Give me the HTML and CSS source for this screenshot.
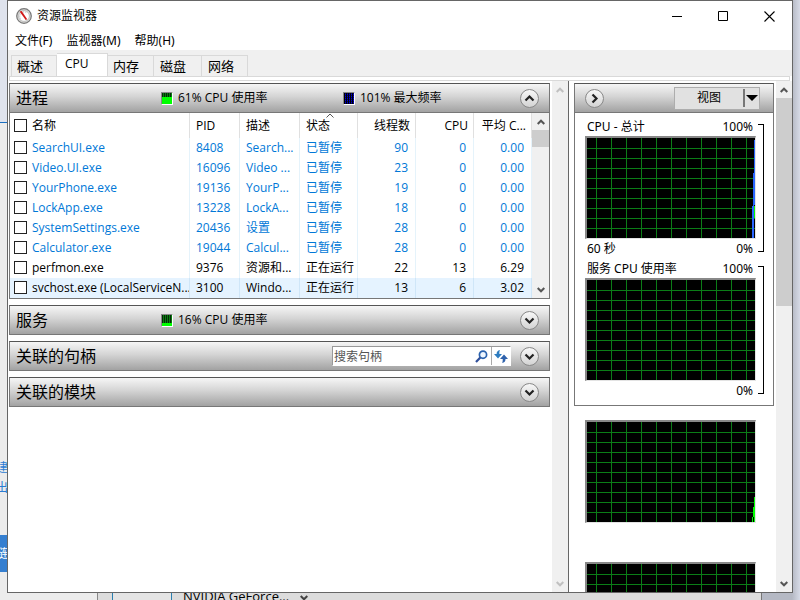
FILE: index.html
```
<!DOCTYPE html>
<html lang="zh-CN">
<head>
<meta charset="utf-8">
<title>资源监视器</title>
<link rel="stylesheet" href="styles.css">
</head>
<body>
<svg class="defs" aria-hidden="true">
  <symbol id="up" viewBox="0 0 8 6"><path d="M0.7 5 4 1.7 7.3 5" fill="none" stroke="currentColor" stroke-width="2"/></symbol>
  <symbol id="down" viewBox="0 0 8 6"><path d="M0.7 1 4 4.3 7.3 1" fill="none" stroke="currentColor" stroke-width="2"/></symbol>
  <symbol id="round-up" viewBox="0 0 19 19"><circle cx="9.500" cy="9.500" r="9" fill="url(#knob)" stroke="#888"/><path d="M5.500 11.500 9.500 7.500l4 4" fill="none" stroke="#222" stroke-width="2.200"/></symbol>
  <symbol id="round-down" viewBox="0 0 19 19"><circle cx="9.500" cy="9.500" r="9" fill="url(#knob)" stroke="#888"/><path d="M5.500 7.500l4 4 4-4" fill="none" stroke="#222" stroke-width="2.200"/></symbol>
  <symbol id="round-right" viewBox="0 0 19 19"><circle cx="9.500" cy="9.500" r="9" fill="url(#knob)" stroke="#888"/><path d="M7.500 5.500l4 4-4 4" fill="none" stroke="#222" stroke-width="2.200"/></symbol>
  <linearGradient id="knob" x1="0" y1="0" x2="0" y2="1"><stop offset="0" stop-color="#f8f8f8"/><stop offset="1" stop-color="#d2d2d2"/></linearGradient>
</svg>

<div class="desktop" aria-hidden="true">
  <div class="back-left">
    <span class="back-word word-a">建</span>
    <span class="back-word word-b">出</span>
    <span class="back-tile">链</span>
  </div>
  <div class="back-bottom"><span class="thumb"></span><span class="gpu">NVIDIA GeForce...</span><svg width="8" height="6"><use href="#down"/></svg></div>
</div>

<main class="window">
  <header class="titlebar">
    <svg class="app-icon" viewBox="0 0 16 16"><circle cx="8" cy="8" r="7.300" fill="#d9d9d6" stroke="#777" stroke-width="1.200"/><circle cx="8" cy="8" r="5.400" fill="#fff" stroke="#aaa" stroke-width=".7"/><path d="M4.500 10.500A4.300 4.300 0 0 1 11 5" fill="none" stroke="#999" stroke-width=".8" stroke-dasharray="1 1"/><path d="M3.600 3.600 5.700 3l5.500 8.200-1.500.9z" fill="#d01818"/></svg>
    <h1>资源监视器</h1>
    <button class="caption" aria-label="最小化"><svg width="11" height="11"><path d="M0 5.500h10" stroke="#000"/></svg></button>
    <button class="caption" aria-label="最大化"><svg width="11" height="11"><path d="M.5.5h9v9h-9z" fill="none" stroke="#000"/></svg></button>
    <button class="caption" aria-label="关闭"><svg width="11" height="11"><path d="M.5.5l10 10M10.500.5l-10 10" stroke="#000" stroke-width="1.100"/></svg></button>
  </header>
  <nav class="menubar"><button>文件(F)</button><button>监视器(M)</button><button>帮助(H)</button></nav>
  <div class="tabs" role="tablist">
    <button role="tab">概述</button><button role="tab" class="active" aria-selected="true">CPU</button><button role="tab">内存</button><button role="tab" class="wide">磁盘</button><button role="tab">网络</button>
  </div>
  <div class="tab-edge"></div>

  <div class="content">
    <div class="left">
      <section class="panel">
        <div class="bar">
          <h2>进程</h2>
          <span class="stat"><i class="meter level-61"></i>61% CPU 使用率</span>
          <span class="stat"><i class="meter freq"></i>101% 最大频率</span>
          <button class="round" aria-label="折叠"><svg><use href="#round-up"/></svg></button>
        </div>
        <div class="table-wrap">
          <table>
            <colgroup><col><col class="c-pid"><col class="c-desc"><col class="c-num"><col class="c-num"><col class="c-num"><col class="c-num"></colgroup>
            <thead><tr>
              <th><input type="checkbox" aria-label="全选">名称</th><th>PID</th><th>描述</th><th class="sorted">状态<svg width="8" height="5"><path d="M.5 4.500 4 1l3.500 3.500" fill="none" stroke="#555"/></svg></th><th class="n">线程数</th><th class="n">CPU</th><th class="n">平均 C...</th>
            </tr></thead>
            <tbody>
              <tr><td><label><input type="checkbox">SearchUI.exe</label></td><td>8408</td><td>Search...</td><td>已暂停</td><td class="n">90</td><td class="n">0</td><td class="n">0.00</td></tr>
              <tr><td><label><input type="checkbox">Video.UI.exe</label></td><td>16096</td><td>Video ...</td><td>已暂停</td><td class="n">23</td><td class="n">0</td><td class="n">0.00</td></tr>
              <tr><td><label><input type="checkbox">YourPhone.exe</label></td><td>19136</td><td>YourP...</td><td>已暂停</td><td class="n">19</td><td class="n">0</td><td class="n">0.00</td></tr>
              <tr><td><label><input type="checkbox">LockApp.exe</label></td><td>13228</td><td>LockA...</td><td>已暂停</td><td class="n">18</td><td class="n">0</td><td class="n">0.00</td></tr>
              <tr><td><label><input type="checkbox">SystemSettings.exe</label></td><td>20436</td><td>设置</td><td>已暂停</td><td class="n">28</td><td class="n">0</td><td class="n">0.00</td></tr>
              <tr><td><label><input type="checkbox">Calculator.exe</label></td><td>19044</td><td>Calcul...</td><td>已暂停</td><td class="n">28</td><td class="n">0</td><td class="n">0.00</td></tr>
              <tr class="running"><td><label><input type="checkbox">perfmon.exe</label></td><td>9376</td><td>资源和...</td><td>正在运行</td><td class="n">22</td><td class="n">13</td><td class="n">6.29</td></tr>
              <tr class="running hover"><td><label><input type="checkbox">svchost.exe (LocalServiceN...</label></td><td>3100</td><td>Windo...</td><td>正在运行</td><td class="n">13</td><td class="n">6</td><td class="n">3.02</td></tr>
            </tbody>
          </table>
          <div class="scroll"><svg><use href="#up"/></svg><span class="thumb-small"></span><svg><use href="#down"/></svg></div>
        </div>
      </section>
      <section class="panel"><div class="bar">
        <h2>服务</h2><span class="stat"><i class="meter level-16"></i>16% CPU 使用率</span>
        <button class="round" aria-label="展开"><svg><use href="#round-down"/></svg></button>
      </div></section>
      <section class="panel"><div class="bar">
        <h2>关联的句柄</h2>
        <div class="search">
          <input type="text" placeholder="搜索句柄" aria-label="搜索句柄">
          <button aria-label="搜索"><svg width="13" height="13"><circle cx="8" cy="4.700" r="3.600" fill="#eef6ff" stroke="#2a62ae" stroke-width="1.700"/><path d="M5.300 7.600 1 12" stroke="#2f4f9a" stroke-width="2.200"/></svg></button>
          <button class="refresh" aria-label="刷新"><svg width="14" height="13"><path d="M6 0C3.500.4 2.600 2 2.600 4H0l4 4.500L8 4H5.400C5.300 2.400 5.400 1.200 6 0z" fill="#2d7cc0"/><path d="M8 13c2.600-.3 3.500-2 3.500-4H14l-4-4.500L6 9h2.700c.1 1.600 0 2.900-.7 4z" fill="#2f62ac"/></svg></button>
        </div>
        <button class="round" aria-label="展开"><svg><use href="#round-down"/></svg></button>
      </div></section>
      <section class="panel"><div class="bar">
        <h2>关联的模块</h2>
        <button class="round" aria-label="展开"><svg><use href="#round-down"/></svg></button>
      </div></section>
    </div>
    <div class="scroll disabled"><svg><use href="#up"/></svg><span class="track"></span><svg><use href="#down"/></svg></div>

    <aside class="right">
      <section class="panel">
        <div class="bar">
          <button class="round" aria-label="隐藏图表"><svg><use href="#round-right"/></svg></button>
          <div class="view"><button>视图</button><button class="drop" aria-label="视图选项"><svg width="12" height="6"><path d="M0 0h12L6 6z"/></svg></button></div>
        </div>
        <div class="charts">
          <div class="chart">
            <div class="plot-col">
              <div class="caption-row"><span>CPU - 总计</span><span>100%</span></div>
              <div class="plot"><svg viewBox="0 0 6 100"><path d="M5.500 2v65M4.500 35v65M3.500 68v32" stroke="#2a66ff"/><path d="M5.500 68v12" stroke="#0f0"/></svg></div>
              <div class="caption-row"><span>60 秒</span><span>0%</span></div>
            </div>
            <div class="bracket"></div>
          </div>
          <div class="chart">
            <div class="plot-col">
              <div class="caption-row"><span>服务 CPU 使用率</span><span>100%</span></div>
              <div class="plot"></div>
              <div class="caption-row end"><span>0%</span></div>
            </div>
            <div class="bracket"></div>
          </div>
        </div>
      </section>
      <div class="plot loose"><svg viewBox="0 0 6 100"><path d="M5.500 75v25M4.500 85v10M3.500 95v5" stroke="#0f0"/></svg></div>
      <div class="plot loose"></div>
    </aside>
    <div class="scroll"><svg><use href="#up"/></svg><span class="thumb-long"></span><svg><use href="#down"/></svg></div>
  </div>
</main>
</body>
</html>
```
FILE: styles.css
```
* { box-sizing: border-box; }
body {
  margin: 0;
  height: 100vh;
  padding: 0 7px 7px;
  overflow: hidden;
  background: #d4d8e2;
  font: 12px/20px "Open Sans", "Noto Sans CJK SC", sans-serif;
  color: #000;
}
button, input { font: inherit; color: inherit; margin: 0; }
button { padding: 0; border: 0; background: none; }
h1, h2 { margin: 0; font-weight: 400; }
svg { display: block; flex: none; }
.defs { position: absolute; width: 0; height: 0; }

/* windows behind the monitor */
.desktop { position: absolute; inset: 0; overflow: hidden; z-index: -1; background: linear-gradient(to left, #d6dae6, #b5b9c4 8px); }
.back-left {
  position: absolute; left: 0; top: 0; bottom: 0; width: 98px;
  background: linear-gradient(#dfe3ed 122px, #1a6fc0 122px, #1a6fc0 123px, #ececec 123px);
  border-right: 1px solid #888;
}
.back-word { position: absolute; left: -4px; color: #2b7cd3; }
.word-a { top: 458px; }
.word-b { top: 478px; }
.back-tile { position: absolute; left: 0; top: 535px; width: 30px; height: 37px; background: #357fd0; color: #fff; line-height: 37px; text-indent: -4px; }
.back-bottom {
  position: absolute; left: 98px; right: 38px; bottom: 0; height: 16px;
  display: flex; align-items: flex-end; gap: 11px; padding-left: 14px;
  background: #dcdcdc; border-right: 1px solid #777;
}
.back-bottom svg { color: #444; margin-bottom: -1px; }
.back-bottom .thumb { width: 60px; height: 16px; border: solid #2a7fb0; border-width: 0 1px; background: #e4e4e4; }
.gpu { line-height: 16px; height: 12px; font-size: 13px; }

/* window frame */
.window { height: 100%; display: flex; flex-direction: column; background: #fff; border: 1px solid #666; overflow: hidden; }
.titlebar { display: flex; align-items: center; height: 30px; padding-left: 8px; flex: none; }
.app-icon { width: 16px; height: 16px; margin-right: 5px; }
h1 { font-size: 12px; flex: 1; }
.caption { width: 46px; height: 30px; display: grid; place-items: center; }
.menubar { display: flex; gap: 14px; padding-left: 7px; height: 19px; flex: none; font-family: "Noto Sans", "Noto Sans CJK SC", sans-serif; }
.tabs { display: flex; align-items: flex-end; height: 26px; padding-left: 3px; background: #f0f0f0; flex: none; font-size: 13px; }
.tabs button { width: 46px; height: 21px; padding-left: 5px; line-height: 18px; text-align: left; border: 1px solid #d9d9d9; border-width: 1px 1px 0 0; background: #f0f0f0; }
.tabs button:first-child { border-left-width: 1px; }
.tabs .wide { width: 48px; padding-left: 6px; }
.tabs button:last-child { padding-left: 6px; }
.tabs .active { width: 51px; height: 23px; padding: 0 0 2px 8px; background: #fff; font-size: 12px; }
.tab-edge { height: 5px; margin: 0 2px 0 1px; border: 1px solid #d9d9d9; flex: none; }

/* two scrolling columns */
.content { flex: 1; min-height: 0; display: flex; }
.left { flex: 1; min-width: 0; padding: 2px 2px 0 1px; display: flex; flex-direction: column; gap: 6px; }
.right { width: 208px; padding: 2px 2px 0 5px; border-left: 1px solid #666; overflow: hidden; flex: none; }
.panel { border: 1px solid #777; border-top-color: #555; background: #fff; flex: none; }
.bar { display: flex; align-items: center; height: 28px; padding: 0 10px 0 6px; background: linear-gradient(#f6f6f6, #d4d4d4 45%, #a2a2a2); }
.panel .bar:not(:last-child) { height: 29px; border-bottom: 1px solid #777; }
h2 { font-size: 16px; width: 145px; line-height: 28px; flex: none; }
.stat { display: flex; align-items: center; gap: 5px; width: 182px; flex: none; }
.bar .stat:nth-child(3) { width: 140px; }
.meter { width: 12px; height: 13px; border: 1px solid #888; border-right-color: #fff; border-bottom-color: #fff; }
.level-61 { background: repeating-linear-gradient(90deg, #032a05 0 1px, #0a7d12 1px 2px) 0 0 / 100% 4px no-repeat, #0f0; }
.level-16 { background: repeating-linear-gradient(90deg, #032a05 0 1px, #0a7d12 1px 2px) 0 0 / 100% 8px no-repeat, #0f0; }
.freq { background: repeating-linear-gradient(90deg, #000 0 1px, transparent 1px 2px), repeating-linear-gradient(#00006a 0 1px, #0000d0 1px 2px); }
.round { width: 19px; height: 19px; margin-left: auto; flex: none; }
.round svg { width: 19px; height: 19px; }

/* process list */
.table-wrap { display: flex; }
.table-wrap .scroll { width: 17px; }
table { flex: 1; table-layout: fixed; width: 100%; border-collapse: separate; border-spacing: 0; color: #0078d7; }
.c-pid { width: 50px; }
.c-desc { width: 60px; }
.c-num { width: 58px; }
th, td { height: 20px; padding: 0 6px; text-align: left; font-weight: 400; white-space: nowrap; overflow: hidden; border-right: 1px solid #e5f3fb; }
th { height: 25px; color: #000; border-right-color: #e0e0e0; position: relative; }
th:first-child, td:first-child { padding: 0 0 0 4px; }
.n { text-align: right; padding: 0 7px 0 0; }
th.n { padding-right: 5px; }
.sorted svg { position: absolute; left: 26px; top: 0; }
.running { color: #000; }
.hover td { background: #e5f3ff; border-right-color: #cfe6f8; }
input[type=checkbox] { appearance: none; width: 13px; height: 13px; border: 1px solid #222; background: #fff; vertical-align: -2px; margin-right: 5px; }

/* scroll bars */
.scroll { width: 16px; background: #f0f0f0; color: #555; display: flex; flex-direction: column; align-items: center; flex: none; }
.scroll svg { width: 8px; height: 6px; margin: 6px 0 5px; }
.disabled { color: #c0c0c0; }
.thumb-small { width: 100%; height: 17px; background: #cdcdcd; margin-bottom: auto; }
.thumb-long { width: 100%; flex: 0 1 208px; background: #cdcdcd; margin-bottom: auto; }
.track { flex: 1; }

.search { display: flex; align-items: center; width: 179px; height: 20px; margin-left: auto; background: #fff; border: 1px solid #999; border-right-color: #fff; border-bottom-color: #fff; }
.search + .round { margin-left: 9px; }
.search input { flex: 1; min-width: 0; height: 18px; padding: 2px 1px 0; border: 0; background: none; outline: 0; }
.search input::placeholder { color: #555; opacity: 1; }
.search button { width: 19px; height: 18px; display: grid; place-items: center; }
.search .refresh { border-left: 1px solid #aaa; }

/* charts */
.right .bar { padding: 0 13px 0 10px; }
.right .round { margin: 0; }
.view { display: flex; align-items: center; width: 86px; height: 23px; margin-left: auto; background: #e1e1e1; border: 1px solid #adadad; }
.view button { flex: 1; height: 18px; line-height: 18px; }
.view .drop { flex: 0 0 16px; border-left: 2px solid #777; display: grid; place-items: center; }
.charts { padding: 4px 9px 4px 10px; }
.chart { display: flex; gap: 2px; height: 142px; }
.plot-col { flex: 1; }
.caption-row { display: flex; justify-content: space-between; height: 19px; line-height: 19px; padding: 0 3px 0 2px; font-family: "Noto Sans", "Noto Sans CJK SC", sans-serif; }
.end { justify-content: flex-end; }
.plot {
  height: 103px; border: solid #888; border-width: 2px 1px 1px 2px; border-right-color: #e3e3e3; border-bottom-color: #e3e3e3;
  background:
    repeating-linear-gradient(to right, transparent 0 14px, #0b7d17 14px 15px) -5px 0 / 300px 100% no-repeat,
    repeating-linear-gradient(transparent 0 9px, #0b7d17 9px 10px) 0 1px / 100% 100px no-repeat,
    #000;
}
.plot svg { width: 6px; height: 100px; margin-left: auto; }
.bracket { width: 6px; height: 128px; margin-top: 7px; border: solid #000; border-width: 1px 1px 1px 0; }
.loose { margin: 14px 18px 39px 11px; }
```
